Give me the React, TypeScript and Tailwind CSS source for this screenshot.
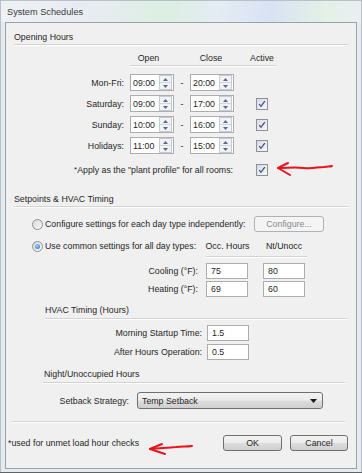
import React from "react";

const TXT = "text-[8.8px] leading-[12px] text-[#262626] whitespace-nowrap";

function Line({ cls }: { cls: string }) {
  return <div className={`h-px bg-[#d3d3d3] shadow-[0_1px_0_#ffffff] ${cls}`} />;
}

function Check() {
  return (
    <div className="w-[12px] h-[12px] border border-[#8e9096] bg-[linear-gradient(135deg,#d8dbe2,#f6f7f9)] flex items-center justify-center">
      <svg width="8" height="8" viewBox="0 0 8 8">
        <path d="M1.2 4.2 L3 6.3 L6.8 1.2" fill="none" stroke="#3b4f96" strokeWidth="1.3" />
      </svg>
    </div>
  );
}

function Radio({ on }: { on?: boolean }) {
  return (
    <div className="w-[11px] h-[11px] rounded-full border border-[#8e9096] bg-[linear-gradient(135deg,#d5d8de,#f7f8fa)] flex items-center justify-center">
      {on && <div className="w-[5px] h-[5px] rounded-full bg-[radial-gradient(circle_at_40%_35%,#9fd0f5,#2b6fb8)]" />}
    </div>
  );
}

function Spin() {
  return (
    <div className="ml-auto mr-px w-[13px] h-[15px] flex flex-col border border-[#c7cacf] bg-[#f1f2f4]">
      <div className="flex-1 flex items-center justify-center border-b border-[#d3d6db]">
        <svg width="5" height="3" viewBox="0 0 5 3"><path d="M0 3 L2.5 0 L5 3 Z" fill="#56688f" /></svg>
      </div>
      <div className="flex-1 flex items-center justify-center">
        <svg width="5" height="3" viewBox="0 0 5 3"><path d="M0 0 L2.5 3 L5 0 Z" fill="#56688f" /></svg>
      </div>
    </div>
  );
}

function TimeBox({ v }: { v: string }) {
  return (
    <div className="w-[44px] h-[17px] bg-white border border-[#abadb3] flex items-center pl-[2px]">
      <span className={TXT}>{v}</span>
      <Spin />
    </div>
  );
}

function Box({ v, w, h }: { v: string; w: string; h: string }) {
  return (
    <div className={`${w} ${h} bg-white border border-[#abadb3] flex items-center pl-[4px]`}>
      <span className={TXT}>{v}</span>
    </div>
  );
}

function Btn({ label, w, disabled }: { label: string; w: string; disabled?: boolean }) {
  return (
    <div
      className={`${w} h-[16px] rounded-[3px] border flex items-center justify-center ${
        disabled
          ? "border-[#adb2b5] bg-[#f4f4f4]"
          : "border-[#707070] bg-[linear-gradient(#f3f3f3,#ebebeb_48%,#dddddd_52%,#cfcfcf)]"
      }`}
    >
      <span className={`text-[8.8px] leading-[12px] ${disabled ? "text-[#8a8a8a]" : "text-[#262626]"}`}>{label}</span>
    </div>
  );
}

function HourRow({ label, open, close, active }: { label: string; open: string; close: string; active: boolean }) {
  return (
    <div className="flex items-center h-[17px]">
      <div className={`w-[118px] text-right ${TXT}`}>{label}</div>
      <div className="ml-[6px]"><TimeBox v={open} /></div>
      <div className={`w-[16px] text-center ${TXT}`}>-</div>
      <TimeBox v={close} />
      <div className="ml-[22px]">{active && <Check />}</div>
    </div>
  );
}

export default function App() {
  return (
    <div className="relative w-[362px] h-[473px] overflow-hidden bg-[#e3e8ee] font-['Liberation_Sans',Arial,sans-serif]">
      {/* glass title bar */}
      <div className="h-[22px] flex items-center pl-[6px] border-t border-l border-r border-[#b9c0c8] bg-[linear-gradient(90deg,#eef1f5_0%,#e8ecf2_25%,#dcefe2_45%,#e4ecf4_60%,#d9e2f3_75%,#e3f1e6_90%,#eaeef3_100%)]">
        <span className="text-[9.2px] leading-[12px] text-[#3c3c3c]">System Schedules</span>
      </div>
      <div className="flex border-l border-r border-[#b9c0c8] bg-[#e6ebf0] pl-[4px] pr-[4px]">
        {/* client panel */}
        <div className="w-[352px] h-[447px] border border-[#9aa3ac] bg-[#f0f0f0] flex flex-col">
          <div className={`mt-[8px] pl-[8px] ${TXT}`}>Opening Hours</div>
          <Line cls="mt-[1px] ml-[8px] w-[334px]" />

          <div className="mt-[7px] flex h-[12px]">
            <div className={`ml-[118px] w-[49px] text-center ${TXT}`}>Open</div>
            <div className={`ml-[14px] w-[48px] text-center ${TXT}`}>Close</div>
            <div className={`ml-[3px] w-[48px] text-center ${TXT}`}>Active</div>
          </div>
          <Line cls="mt-[1px] ml-[124px] w-[147px]" />

          <div className="mt-[8px] flex flex-col gap-[4px]">
            <HourRow label="Mon-Fri:" open="09:00" close="20:00" active={false} />
            <HourRow label="Saturday:" open="09:00" close="17:00" active />
            <HourRow label="Sunday:" open="10:00" close="16:00" active />
            <HourRow label="Holidays:" open="11:00" close="15:00" active />
          </div>

          <div className="mt-[9px] flex items-center h-[14px]">
            <div className={`w-[227px] text-right ${TXT}`}>
              <sup className="text-[8px] relative top-[-1px]">*</sup>Apply as the "plant profile" for all rooms:
            </div>
            <div className="ml-[23px]"><Check /></div>
          </div>

          <div className={`mt-[16px] pl-[8px] ${TXT}`}>Setpoints &amp; HVAC Timing</div>
          <Line cls="mt-[1px] ml-[8px] w-[335px]" />

          <div className="mt-[9px] flex items-center h-[16px] pl-[26px]">
            <Radio />
            <div className={`ml-[2px] w-[209px] ${TXT}`}>Configure settings for each day type independently:</div>
            <Btn label="Configure..." w="w-[70px]" disabled />
          </div>

          <div className="mt-[7px] flex items-center h-[14px] pl-[26px]">
            <Radio on />
            <div className={`ml-[2px] w-[161px] ${TXT}`}>Use common settings for all day types:</div>
            <div className={`w-[43px] flex justify-center ${TXT}`}>Occ. Hours</div>
            <div className={`ml-[14px] w-[42px] flex justify-center ${TXT}`}>Nt/Unocc</div>
          </div>
          <Line cls="mt-[3px] ml-[200px] w-[101px]" />

          <div className="mt-[6px] flex items-center h-[16px]">
            <div className={`w-[192px] text-right ${TXT}`}>Cooling (°F):</div>
            <div className="ml-[8px]"><Box v="75" w="w-[42px]" h="h-[16px]" /></div>
            <div className="ml-[15px]"><Box v="80" w="w-[42px]" h="h-[16px]" /></div>
          </div>
          <div className="mt-[2px] flex items-center h-[16px]">
            <div className={`w-[192px] text-right ${TXT}`}>Heating (°F):</div>
            <div className="ml-[8px]"><Box v="69" w="w-[42px]" h="h-[16px]" /></div>
            <div className="ml-[15px]"><Box v="60" w="w-[42px]" h="h-[16px]" /></div>
          </div>

          <div className={`mt-[7px] pl-[39px] ${TXT}`}>HVAC Timing (Hours)</div>
          <Line cls="mt-[2px] ml-[39px] w-[303px]" />

          <div className="mt-[6px] flex items-center h-[16px]">
            <div className={`w-[196px] text-right ${TXT}`}>Morning Startup Time:</div>
            <div className="ml-[5px]"><Box v="1.5" w="w-[42px]" h="h-[16px]" /></div>
          </div>
          <div className="mt-[3px] flex items-center h-[16px]">
            <div className={`w-[196px] text-right ${TXT}`}>After Hours Operation:</div>
            <div className="ml-[5px]"><Box v="0.5" w="w-[42px]" h="h-[16px]" /></div>
          </div>

          <div className={`mt-[8px] pl-[38px] ${TXT}`}>Night/Unoccupied Hours</div>
          <Line cls="mt-[2px] ml-[37px] w-[302px]" />

          <div className="mt-[9px] flex items-center h-[17px]">
            <div className={`w-[123px] text-right ${TXT}`}>Setback Strategy:</div>
            <div className="ml-[8px] w-[186px] h-[17px] rounded-[3px] border border-[#707070] bg-[linear-gradient(#f3f3f3,#ebebeb_48%,#dddddd_52%,#cfcfcf)] flex items-center pl-[4px] pr-[5px]">
              <span className={TXT}>Temp Setback</span>
              <svg className="ml-auto" width="7" height="4" viewBox="0 0 7 4"><path d="M0 0 L7 0 L3.5 4 Z" fill="#1a1a1a" /></svg>
            </div>
          </div>

          <Line cls="mt-[12px] ml-[6px] w-[333px]" />

          <div className="mt-[13px] flex items-center h-[16px]">
            <div className={`pl-[2px] w-[217px] ${TXT}`}>*used for unmet load hour checks</div>
            <Btn label="OK" w="w-[59px]" />
            <div className="ml-[8px]"><Btn label="Cancel" w="w-[58px]" /></div>
          </div>
        </div>
      </div>
      <div className="h-[3px] border-l border-r border-[#b9c0c8] bg-[#e6ebf0]" />
      <div className="h-px bg-[#5d636b]" />

      {/* red annotation arrows */}
      <svg className="absolute left-[274px] top-[160px]" width="62" height="22" viewBox="0 0 62 22">
        <path d="M4 8 C14 8 20 7 30 8 C38 9 44 7 50 7 C54 6 56 7 58 6" fill="none" stroke="#e8141b" strokeWidth="2" strokeLinecap="round" />
        <path d="M14 3 L4 8 L16 15" fill="none" stroke="#e8141b" strokeWidth="2" strokeLinecap="round" strokeLinejoin="round" />
      </svg>
      <svg className="absolute left-[146px] top-[439px]" width="50" height="20" viewBox="0 0 50 20">
        <path d="M4 10 C14 9 22 9 30 8 C36 7 40 8 46 7" fill="none" stroke="#e8141b" strokeWidth="2" strokeLinecap="round" />
        <path d="M16 5 L4 10 L19 15" fill="none" stroke="#e8141b" strokeWidth="2" strokeLinecap="round" strokeLinejoin="round" />
      </svg>
    </div>
  );
}
